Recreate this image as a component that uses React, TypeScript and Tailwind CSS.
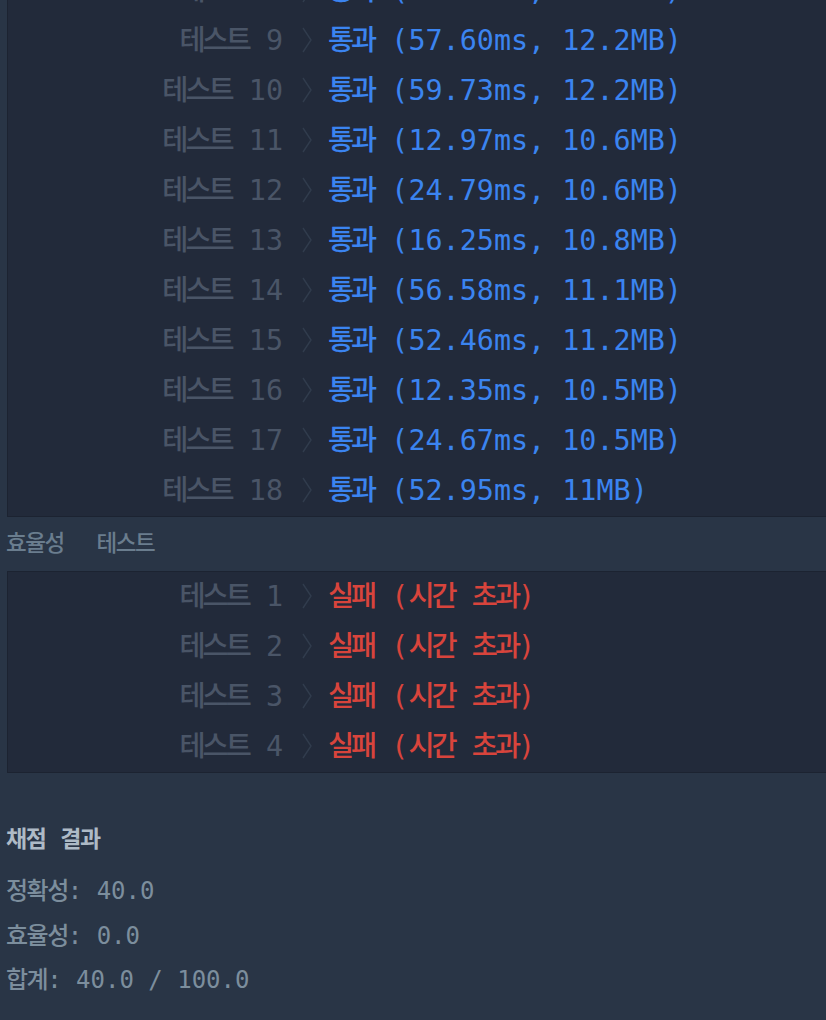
import React from 'react';

type Row = { n: number; ok: boolean; text: string };

const accuracyRows: Row[] = [
  { n: 8, ok: true, text: '(55.40ms, 12.1MB)' },
  { n: 9, ok: true, text: '(57.60ms, 12.2MB)' },
  { n: 10, ok: true, text: '(59.73ms, 12.2MB)' },
  { n: 11, ok: true, text: '(12.97ms, 10.6MB)' },
  { n: 12, ok: true, text: '(24.79ms, 10.6MB)' },
  { n: 13, ok: true, text: '(16.25ms, 10.8MB)' },
  { n: 14, ok: true, text: '(56.58ms, 11.1MB)' },
  { n: 15, ok: true, text: '(52.46ms, 11.2MB)' },
  { n: 16, ok: true, text: '(12.35ms, 10.5MB)' },
  { n: 17, ok: true, text: '(24.67ms, 10.5MB)' },
  { n: 18, ok: true, text: '(52.95ms, 11MB)' },
];

const efficiencyRows: Row[] = [1, 2, 3, 4].map((n) => ({ n, ok: false, text: '' }));

const Ko: React.FC<{ children: React.ReactNode; className?: string }> = ({ children, className = 'tracking-[-3px]' }) => (
  <span className={`font-['Noto_Sans_CJK_KR',sans-serif] font-medium leading-none ${className}`}>{children}</span>
);

const Chevron = () => (
  <svg width="12" height="28" viewBox="0 0 12 28" className="shrink-0">
    <polyline points="2,2 10,14 2,26" fill="none" stroke="#313c4d" strokeWidth="1.4" />
  </svg>
);

const ResultRow: React.FC<{ row: Row }> = ({ row }) => (
  <div className="flex items-center h-[50px] pb-[3px] whitespace-pre">
    <div className="w-[275px] text-right text-[#4a5567]">
      <Ko>테스트</Ko> {row.n}
    </div>
    <div className="w-[45px] flex justify-center pl-[2px]">
      <Chevron />
    </div>
    {row.ok ? (
      <div className="text-[#3b84f0]">
        <Ko>통과</Ko> {row.text}
      </div>
    ) : (
      <div className="text-[#d8443c]">
        <Ko>실패</Ko> (<Ko>시간</Ko> <Ko>초과</Ko>)
      </div>
    )}
  </div>
);

export default function App() {
  return (
    <div className="w-full h-[1020px] overflow-hidden bg-[#293546] font-['DejaVu_Sans_Mono','Noto_Sans_CJK_KR',monospace]">
      <div className="mt-[-35px] ml-[7px] bg-[#222a3a] border-y border-l border-[#1c2331] text-[28.4px] leading-none">
        {accuracyRows.map((r) => (
          <ResultRow key={r.n} row={r} />
        ))}
      </div>

      <div className="h-[54px] flex items-center pl-[6px] pb-[5px] gap-[33px] text-[22.5px] text-[#6a7d8e] font-medium font-['Noto_Sans_CJK_KR',sans-serif] tracking-[-1.5px] leading-none">
        <span>효율성</span>
        <span>테스트</span>
      </div>

      <div className="ml-[7px] bg-[#222a3a] border-y border-l border-[#1c2331] text-[28.4px] leading-none">
        {efficiencyRows.map((r) => (
          <ResultRow key={r.n} row={r} />
        ))}
      </div>

      <div className="pl-[6px] pt-[48px]">
        <h3 className="flex gap-[15px] text-[23px] font-semibold text-[#aebac6] font-['Noto_Sans_CJK_KR',sans-serif] leading-[32px] tracking-[-1.5px]">
          <span>채점</span>
          <span>결과</span>
        </h3>
        <div className="mt-[15px] flex flex-col text-[24px] text-[#7c8e9d] leading-none whitespace-pre">
          <div className="h-[44.5px] flex items-center">
            <span>
              <Ko className="tracking-[-1.5px]">정확성</Ko>: 40.0
            </span>
          </div>
          <div className="h-[44.5px] flex items-center">
            <span>
              <Ko className="tracking-[-1.5px]">효율성</Ko>: 0.0
            </span>
          </div>
          <div className="h-[44.5px] flex items-center">
            <span>
              <Ko className="tracking-[-1.5px]">합계</Ko>: 40.0 / 100.0
            </span>
          </div>
        </div>
      </div>
    </div>
  );
}
